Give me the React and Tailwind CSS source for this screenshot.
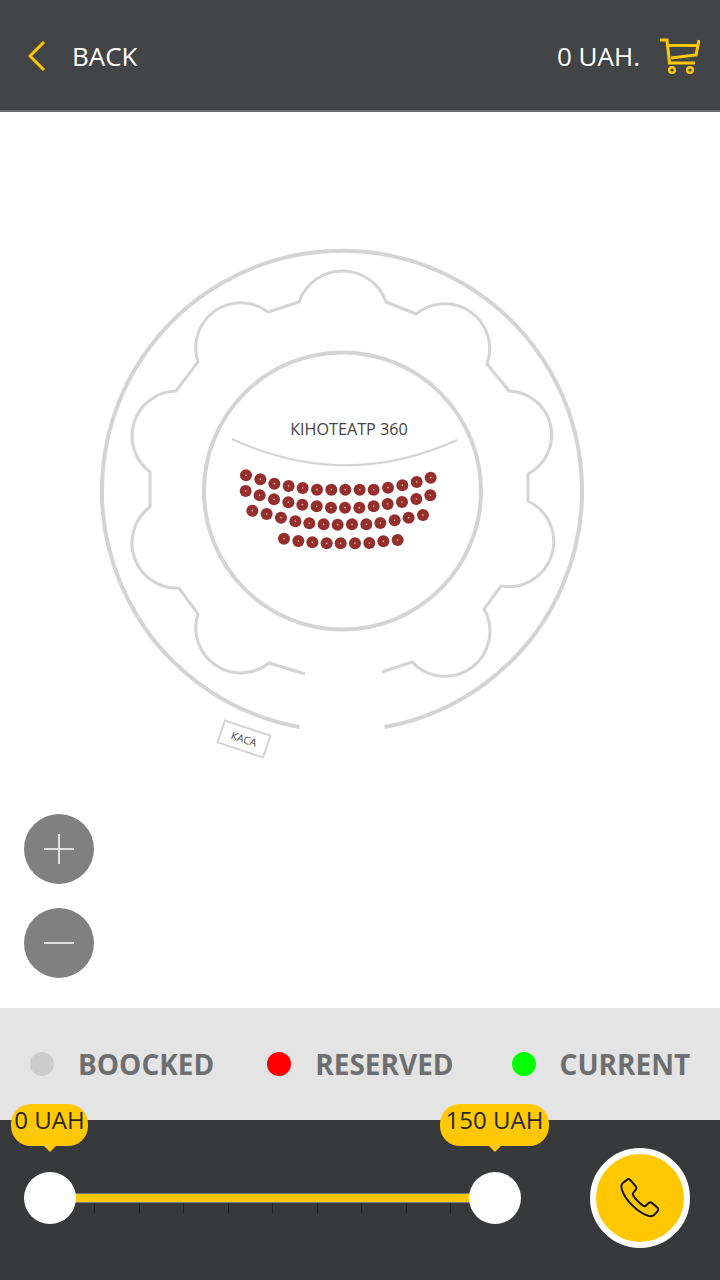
const rows = [
  [[78,196],[121,208],[163,221],[206,228],[248,234],[291,239],[334,239],[376,239],[419,239],[461,239],[504,233],[547,226],[590,216],[632,203]],
  [[77,243],[119,256],[162,268],[205,277],[247,284],[290,289],[333,293],[375,293],[418,293],[461,289],[503,282],[546,276],[589,267],[631,256]],
  [[97,302],[140,312],[183,323],[226,334],[268,340],[311,343],[353,344],[396,343],[439,343],[481,339],[524,331],[566,323],[609,315]],
  [[192,386],[235,393],[277,397],[320,400],[362,400],[405,400],[448,399],[490,394],[533,390]],
];

const ticks = [94, 139, 183, 228, 272, 317, 361, 406, 450];

const legend = [
  { label: "BOOCKED", color: "bg-[#cccccc]", dot: "ml-[30px]" },
  { label: "RESERVED", color: "bg-[#ff0000]", dot: "ml-[53px]" },
  { label: "CURRENT", color: "bg-[#00ff00]", dot: "ml-[58px]" },
];

function HallMap() {
  return (
    <svg viewBox="0 112 720 896" className="block w-[720px] h-[896px]" fill="none">
      <path d="M299.5 727 A240 240 0 1 1 384.5 727" stroke="#d6d3d5" strokeWidth="4" />
      <circle cx="342.5" cy="491" r="138.5" stroke="#d6d3d5" strokeWidth="4" />
      <path
        d="M305 674 L269 663 A45 45 0 0 1 198 614 L179 588 A45 45 0 0 1 150 507 L150 472 A45 45 0 0 1 176 391 L198 362 A45 45 0 0 1 268 312 L299 302 A46 46 0 0 1 386 302 L416 314 A45 45 0 0 1 487 364 L509 391 A44 44 0 0 1 528 474 L528 501 A45 45 0 0 1 501 586 L484 609 A45 45 0 0 1 412 662 L382 672"
        stroke="#d6d3d5"
        strokeWidth="3"
      />
      <path d="M232 439 Q345 491 457 440" stroke="#d6d3d5" strokeWidth="2" />
      <text x="349" y="435" textAnchor="middle" fontSize="16.2" fill="#444444" fontFamily="'Open Sans', sans-serif">
        КІНОТЕАТР 360
      </text>
      {rows.flat().map(([x, y], i) => (
        <g key={i}>
          <circle cx={220 + x / 3} cy={410 + y / 3} r="6" fill="#952f2e" />
          <circle cx={220 + x / 3} cy={410 + y / 3} r="0.8" fill="#e6c4c4" />
        </g>
      ))}
      <g transform="rotate(18.5 244 739)">
        <rect x="220" y="727.5" width="48" height="23" stroke="#d6d3d5" strokeWidth="2" fill="#ffffff" />
        <text x="244" y="743" textAnchor="middle" fontSize="10.5" fill="#444444" fontFamily="'Open Sans', sans-serif">
          КАСА
        </text>
      </g>
    </svg>
  );
}

function CartIcon() {
  return (
    <svg width="40" height="36" viewBox="0 0 40 36" fill="none" stroke="#ffc800" strokeWidth="3">
      <path d="M0 2 H7 L9.5 25 H35" />
      <path d="M8 7.5 H38" />
      <path d="M39 2 L36 17 L11 20" />
      <circle cx="12" cy="32" r="2.8" strokeWidth="2.4" />
      <circle cx="30" cy="32" r="2.8" strokeWidth="2.4" />
    </svg>
  );
}

function PhoneIcon() {
  return (
    <svg width="50" height="50" viewBox="0 0 24 24" fill="none" stroke="#111111" strokeWidth="0.95" strokeLinecap="round" strokeLinejoin="round">
      <path d="M7.2 3.2 C6.7 2.8 6.1 2.9 5.7 3.3 L3.8 4.8 C3 5.5 2.9 6.6 3.3 7.9 C4.8 12.8 10.6 18.8 16 20.6 C17.2 21 18.2 20.8 18.9 20 L20.4 18.4 C20.9 17.9 20.9 17.2 20.4 16.7 L17.8 14.4 C17.3 14 16.7 14 16.2 14.4 L14.9 15.6 C14.5 16 14 16 13.5 15.7 C11.8 14.5 9.7 12.5 8.7 10.7 C8.4 10.2 8.5 9.7 8.9 9.3 L10 8 C10.4 7.5 10.4 6.9 10 6.4 Z" />
    </svg>
  );
}

function Tooltip({ children, className }) {
  return (
    <div className={`absolute top-[-16px] h-[42px] pb-[10px] rounded-[20px] bg-[#ffc800] flex items-center justify-center text-[24px] text-[#26282b] font-['Open_Sans',sans-serif] leading-none whitespace-nowrap ${className}`}>
      {children}
      <div className="absolute left-1/2 -translate-x-1/2 top-[41px] w-0 h-0 border-x-[7px] border-x-transparent border-t-[7px] border-t-[#ffc800]" />
    </div>
  );
}

export default function App() {
  return (
    <div className="w-[720px] h-[1280px] flex flex-col bg-white overflow-hidden font-['Open_Sans',sans-serif]">
      <header className="h-[112px] shrink-0 bg-[#434446] border-b-2 border-[#6b6c6e] flex items-center pt-[2px] pl-7 pr-5">
        <svg width="18" height="30" viewBox="0 0 18 30" fill="none" stroke="#ffc800" strokeWidth="3">
          <path d="M16 1 L2 15 L16 29" />
        </svg>
        <span className="ml-[26px] text-[26px] text-white">BACK</span>
        <span className="ml-auto text-[26px] text-white">0 UAH.</span>
        <div className="ml-5">
          <CartIcon />
        </div>
      </header>

      <main className="relative h-[896px] shrink-0">
        <HallMap />
        <div className="absolute left-6 bottom-[30px] flex flex-col gap-6">
          <button className="w-[70px] h-[70px] rounded-full bg-[#808080] flex items-center justify-center">
            <svg width="32" height="32" viewBox="0 0 32 32" stroke="#e2e2e2" strokeWidth="2">
              <path d="M1 16 H31 M16 1 V31" />
            </svg>
          </button>
          <button className="w-[70px] h-[70px] rounded-full bg-[#808080] flex items-center justify-center">
            <svg width="32" height="32" viewBox="0 0 32 32" stroke="#e2e2e2" strokeWidth="2">
              <path d="M1 16 H31" />
            </svg>
          </button>
        </div>
      </main>

      <div className="h-[112px] shrink-0 bg-[#e4e4e4] flex items-center">
        {legend.map((item) => (
          <div key={item.label} className="flex items-center">
            <span className={`w-6 h-6 rounded-full ${item.color} ${item.dot}`} />
            <span className="ml-6 text-[28px] font-bold text-[#6d6e70]">{item.label}</span>
          </div>
        ))}
      </div>

      <div className="relative flex-1 bg-[#38393b] flex items-center pb-1 pl-6 pr-[30px]">
        <Tooltip className="left-[11px] w-[77px]">0 UAH</Tooltip>
        <Tooltip className="left-[440px] w-[109px]">150 UAH</Tooltip>
        <div className="relative w-[497px] h-[52px] flex items-center">
          <div className="absolute left-6 right-6 top-[21px] h-[10px] bg-[#ffc800] border-y border-[#77787a]" />
          {ticks.map((x) => (
            <div key={x} className="absolute top-[31px] w-px h-[10px] bg-[#1f2022]" style={{ left: x - 24 }} />
          ))}
          <div className="absolute left-0 w-[52px] h-[52px] rounded-full bg-white" />
          <div className="absolute right-0 w-[52px] h-[52px] rounded-full bg-white" />
        </div>
        <button className="ml-auto w-[100px] h-[100px] rounded-full bg-[#ffc800] border-[6px] border-white flex items-center justify-center">
          <PhoneIcon />
        </button>
      </div>
    </div>
  );
}
